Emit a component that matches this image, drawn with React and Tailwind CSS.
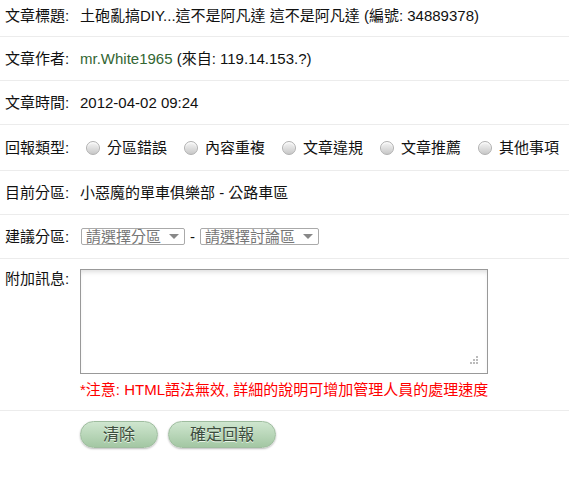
import React from 'react';

const font = { fontFamily: '"Liberation Sans", "Noto Sans CJK TC", sans-serif' };

const Radio = ({ label }) => (
  <label className="flex items-center mr-[17px]">
    <span className="w-[14px] h-[14px] rounded-full border border-[#b0b0b0] bg-gradient-to-b from-[#f6f6f6] to-[#c8c8c8] shadow-[inset_0_1px_1px_#fff] mr-[7px]" />
    <span>{label}</span>
  </label>
);

const Select = ({ text, w }) => (
  <div className={`${w} h-[17px] border border-[#aaa] rounded-[2px] flex items-center justify-between pl-[4px] pr-[5px] text-[#777] text-[15px] leading-none`}>
    <span>{text}</span>
    <span className="w-0 h-0 border-l-[5px] border-r-[5px] border-t-[5px] border-l-transparent border-r-transparent border-t-[#888]" />
  </div>
);

const Row = ({ label, h, children }) => (
  <div className={`flex items-center ${h} border-b border-[#ececec] box-border`}>
    <div className="w-[80px] pl-[5px] shrink-0">{label}:</div>
    <div className="flex-1 min-w-0">{children}</div>
  </div>
);

export default function App() {
  const types = ['分區錯誤', '內容重複', '文章違規', '文章推薦', '其他事項'];
  return (
    <div className="w-[569px] h-[489px] bg-white text-[#111] text-[15px] leading-[20px] overflow-hidden" style={font}>
      <div className="flex items-center h-[37px] pb-[5px] border-b border-[#ececec] box-border">
        <div className="w-[80px] pl-[5px] shrink-0">文章標題:</div>
        <div className="whitespace-nowrap">土砲亂搞DIY...這不是阿凡達 這不是阿凡達 (編號: 34889378)</div>
      </div>
      <Row label="文章作者" h="h-[44px]">
        <span className="text-[#336633]">mr.White1965</span> (來自: 119.14.153.?)
      </Row>
      <Row label="文章時間" h="h-[44px]">2012-04-02 09:24</Row>
      <Row label="回報類型" h="h-[46px]">
        <div className="flex items-center whitespace-nowrap pl-[6px]">
          {types.map((t) => (
            <Radio key={t} label={t} />
          ))}
        </div>
      </Row>
      <Row label="目前分區" h="h-[44px]">小惡魔的單車俱樂部 - 公路車區</Row>
      <Row label="建議分區" h="h-[44px]">
        <div className="flex items-center pl-[1px]">
          <Select text="請選擇分區" w="w-[104px]" />
          <span className="mx-[5px]">-</span>
          <Select text="請選擇討論區" w="w-[119px]" />
        </div>
      </Row>
      <div className="flex h-[152px] pt-[10px] border-b border-[#ececec] box-border">
        <div className="w-[80px] pl-[5px] shrink-0">附加訊息:</div>
        <div className="flex-1">
          <div className="relative w-[408px] h-[105px] border border-[#999] shadow-[inset_0_4px_5px_-2px_#ddd] bg-white">
            <div className="absolute right-[9px] bottom-[9px] grid grid-cols-3 gap-[1px]">
              <span className="w-[2px] h-[2px]" />
              <span className="w-[2px] h-[2px]" />
              <span className="w-[2px] h-[2px] bg-[#bbb]" />
              <span className="w-[2px] h-[2px]" />
              <span className="w-[2px] h-[2px] bg-[#bbb]" />
              <span className="w-[2px] h-[2px] bg-[#bbb]" />
              <span className="w-[2px] h-[2px] bg-[#bbb]" />
              <span className="w-[2px] h-[2px] bg-[#bbb]" />
              <span className="w-[2px] h-[2px] bg-[#bbb]" />
            </div>
          </div>
          <div className="text-[#ff0000] mt-[6px] whitespace-nowrap">*注意: HTML語法無效, 詳細的說明可增加管理人員的處理速度</div>
        </div>
      </div>
      <div className="flex pl-[80px] pt-[10px] gap-[10px]">
        <button className="w-[78px] h-[27px] rounded-full border border-[#9fbd9f] bg-gradient-to-b from-[#cfe6cf] to-[#a3c7a3] shadow-[0_1px_2px_#bbb] text-[#3d4d3d] text-[16px] [text-shadow:0_1px_0_#e8f4e8]">清除</button>
        <button className="w-[108px] h-[27px] rounded-full border border-[#9fbd9f] bg-gradient-to-b from-[#cfe6cf] to-[#a3c7a3] shadow-[0_1px_2px_#bbb] text-[#3d4d3d] text-[16px] [text-shadow:0_1px_0_#e8f4e8]">確定回報</button>
      </div>
    </div>
  );
}
